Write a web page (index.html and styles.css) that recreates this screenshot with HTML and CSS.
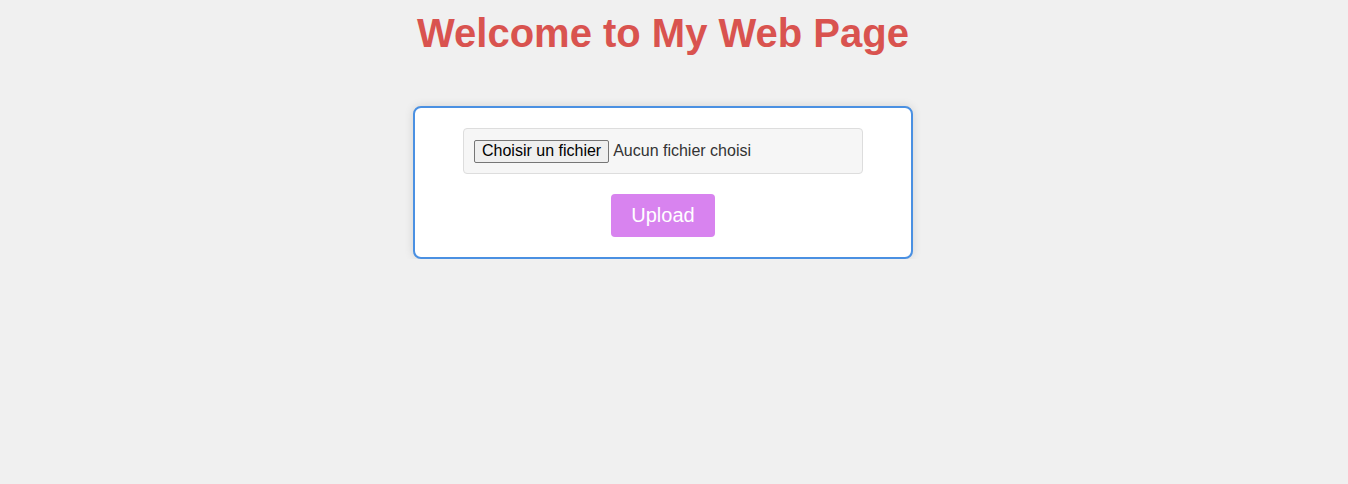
FILE: index.html
```html
<!DOCTYPE html>
<html lang="fr">
<head>
<meta charset="utf-8">
<link rel="stylesheet" href="styles.css">
</head>
<body>
<h1 class="title">Welcome to My Web Page</h1>
<form class="card">
  <label class="file">
    <input class="file-native" type="file">
    <span class="file-btn">Choisir un fichier</span>
    <span class="file-name">Aucun fichier choisi</span>
  </label>
  <button class="upload" type="button">Upload</button>
</form>
</body>
</html>
```
FILE: styles.css
```css
body {
  margin: 0;
  padding: 10px 22px 0 0;
  background: #f0f0f0;
  font-family: "Liberation Sans", Arial, sans-serif;
}
.title {
  margin: 0 0 50px;
  text-align: center;
  color: #d9534f;
  font-size: 40px;
  font-weight: bold;
  line-height: 46px;
}
.card {
  box-sizing: border-box;
  width: 500px;
  margin: 0 auto;
  padding: 20px;
  background: #fff;
  border: 2px solid #4a90e2;
  border-radius: 8px;
  box-shadow: 0 0 10px rgba(0, 0, 0, 0.12);
  display: flex;
  flex-direction: column;
  align-items: center;
  gap: 20px;
}
.file {
  box-sizing: border-box;
  width: 400px;
  height: 46px;
  padding: 0 10px;
  background: #f6f6f6;
  border: 1px solid #ddd;
  border-radius: 4px;
  display: flex;
  align-items: center;
  gap: 4px;
  font-size: 16px;
  color: #333;
}
.file-native {
  display: none;
}
.file-btn {
  box-sizing: border-box;
  height: 23px;
  display: flex;
  align-items: center;
  padding: 0 7px;
  color: #000;
  background: #efefef;
  border: 1px solid #767676;
  border-radius: 2px;
}
.file-name {
  color: #333;
}
.upload {
  width: 104px;
  height: 43px;
  background: #d883ef;
  color: #fff;
  border: none;
  border-radius: 4px;
  font-family: "Liberation Sans", Arial, sans-serif;
  font-size: 20px;
}
```
